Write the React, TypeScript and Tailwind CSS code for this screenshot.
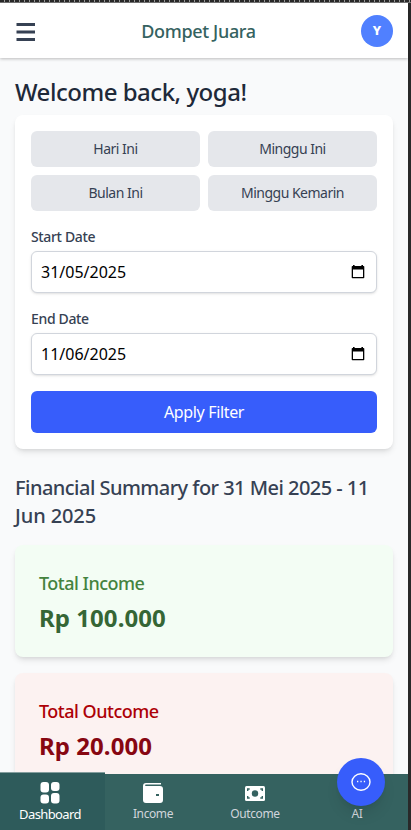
import type { ReactNode } from "react";

function CalendarIcon() {
  return (
    <svg width="14" height="15" viewBox="0 0 14 15" className="mb-0.5 shrink-0">
      <path d="M2 1h1.600v1h6.800V1H12v1h.5q.8 0 .8.8v10.700q0 .8-.8.8h-11q-.8 0-.8-.8V2.800q0-.8.8-.8H2zM2 5.500v7.500h10V5.500z" fill="#000" fillRule="evenodd" />
    </svg>
  );
}

function DateField({ label, value }: { label: string; value: string }) {
  return (
    <div>
      <div className="h-5 text-sm leading-5 font-medium tracking-[-0.35px] text-[#364153]">{label}</div>
      <div className="mt-1 flex h-[42px] items-center justify-between rounded-md border border-[#d1d5dc] bg-white pr-[11px] pl-[9px] shadow-sm">
        <span className="text-base text-black">{value}</span>
        <CalendarIcon />
      </div>
    </div>
  );
}

function Summary({ title, amount, card, titleColor, amountColor }: { title: string; amount: string; card: string; titleColor: string; amountColor: string }) {
  return (
    <section className={`h-28 shrink-0 rounded-lg px-6 pt-6 shadow-md ${card}`}>
      <h3 className={`text-lg leading-7 font-medium tracking-[-0.5px] ${titleColor}`}>{title}</h3>
      <p className={`mt-[3px] text-2xl leading-9 font-bold tracking-[0.05px] ${amountColor}`}>{amount}</p>
    </section>
  );
}

function NavItem({ label, icon }: { label: string; icon: ReactNode }) {
  return (
    <div className="flex flex-1 flex-col items-center pt-[7px] text-[#d1d5dc]">
      <div className="flex h-6 items-center text-white">{icon}</div>
      <span className="text-xs leading-[18px] tracking-[-0.4px]">{label}</span>
    </div>
  );
}

export default function App() {
  return (
    <div className="flex h-[830px] w-[411px] flex-col overflow-hidden bg-[#292929] font-['Noto_Sans','Open_Sans',sans-serif]">
      <div className="h-[3px] shrink-0 border-b border-[#777] bg-[repeating-linear-gradient(90deg,#292929_0,#292929_4px,#999_4px,#999_5px)]" />
      <div className="relative flex min-h-0 w-[408px] flex-1 flex-col bg-[#f9fafb]">
        <header className="z-10 flex h-[55px] shrink-0 items-center justify-between bg-white pr-[15px] pl-4 shadow-[0_1px_3px_rgba(0,0,0,0.25)]">
          <svg width="20" height="20" viewBox="0 0 20 20" className="mt-[3px]">
            <path d="M.5 2.500h18.500M.5 10h18.500M.5 17.500h18.500" stroke="#364153" strokeWidth="2.800" />
          </svg>
          <h1 className="text-lg font-medium tracking-[-0.35px] text-[#356260]">Dompet Juara</h1>
          <div className="flex size-8 items-center justify-center rounded-full bg-[#5080ff] text-[13px] font-extrabold text-white">Y</div>
        </header>
        <main className="flex min-h-0 flex-1 flex-col overflow-hidden px-[15px] pt-[18px]">
          <h2 className="h-[39px] shrink-0 text-2xl leading-8 font-medium tracking-[-0.48px] whitespace-nowrap text-[#1e2939]">Welcome back, yoga!</h2>
          <section className="flex h-[334px] shrink-0 flex-col rounded-lg bg-white p-4 shadow-md">
            <div className="grid grid-cols-2 gap-2 text-sm tracking-[-0.5px] text-[#364153]">
              {["Hari Ini", "Minggu Ini", "Bulan Ini", "Minggu Kemarin"].map((t) => (
                <button key={t} className="h-9 rounded-md bg-[#e5e7eb]">{t}</button>
              ))}
            </div>
            <div className="mt-4 flex flex-col gap-4">
              <DateField label="Start Date" value="31/05/2025" />
              <DateField label="End Date" value="11/06/2025" />
            </div>
            <button className="mt-4 h-[42px] shrink-0 rounded-md bg-[#375dfb] text-base tracking-[-0.35px] text-white">Apply Filter</button>
          </section>
          <h2 className="mt-[25px] shrink-0 text-xl leading-7 font-medium tracking-[-0.53px] whitespace-nowrap text-[#364153]">
            Financial Summary for 31 Mei 2025 - 11<br /><span className="tracking-[-0.1px]">Jun 2025</span>
          </h2>
          <div className="mt-[15px] flex flex-col gap-4">
            <Summary title="Total Income" amount="Rp 100.000" card="bg-[#f3fdf4]" titleColor="text-[#44833e]" amountColor="text-[#356635]" />
            <Summary title="Total Outcome" amount="Rp 20.000" card="bg-[#fcf2f1]" titleColor="text-[#ad0007]" amountColor="text-[#870712]" />
          </div>
        </main>
        <nav className="z-10 flex h-14 shrink-0 bg-[#356260]">
          <div className="-mt-[2px] -mr-[3px] flex w-[105px] shrink-0 flex-col items-center border-t border-[#849e9e] bg-[#2e5b5b] pt-[9px] pr-[5px] text-white">
            <svg width="20" height="22" viewBox="0 0 20 22" fill="currentColor">
              <rect x=".5" y="0" width="8.500" height="10.500" rx="3" /><rect x="11" y="0" width="8.500" height="9" rx="3" />
              <rect x=".5" y="12.500" width="8.500" height="9" rx="3" /><rect x="11" y="11" width="8.500" height="10.500" rx="3" />
            </svg>
            <span className="mt-px text-[13px] leading-[18px] tracking-[-0.6px]">Dashboard</span>
          </div>
          <NavItem label="Income" icon={
            <svg width="20" height="20" viewBox="0 0 20 20"><path d="M3 0h15v1.500H3q-1 0-1 .75T3 3h14q3 0 3 3v11q0 3-3 3H3q-3 0-3-3V3q0-3 3-3zm10 11v2h3v-2z" fill="currentColor" fillRule="evenodd" /></svg>
          } />
          <NavItem label="Outcome" icon={
            <svg width="20" height="15" viewBox="0 0 20 15"><rect width="20" height="15" rx="1.500" fill="currentColor" /><circle cx="10" cy="7.500" r="3.200" fill="#356260" /><path d="M2.700 5V3h2M15.300 3h2v2M2.700 10v2h2M15.300 12h2v-2" fill="none" stroke="#356260" strokeWidth="1.400" /></svg>
          } />
          <NavItem label="AI" icon={null} />
        </nav>
        <button className="absolute right-[23px] bottom-6 z-20 flex size-12 items-center justify-center rounded-full bg-[#375dfb] text-white shadow-lg">
          <svg width="20" height="18" viewBox="0 0 20 18"><ellipse cx="10" cy="9" rx="9" ry="8.200" fill="none" stroke="currentColor" strokeWidth="1.400" /><path d="M6 8.500h1.300M9.400 8.500h1.300M12.800 8.500h1.300" stroke="currentColor" strokeWidth="1.400" /></svg>
        </button>
      </div>
    </div>
  );
}
